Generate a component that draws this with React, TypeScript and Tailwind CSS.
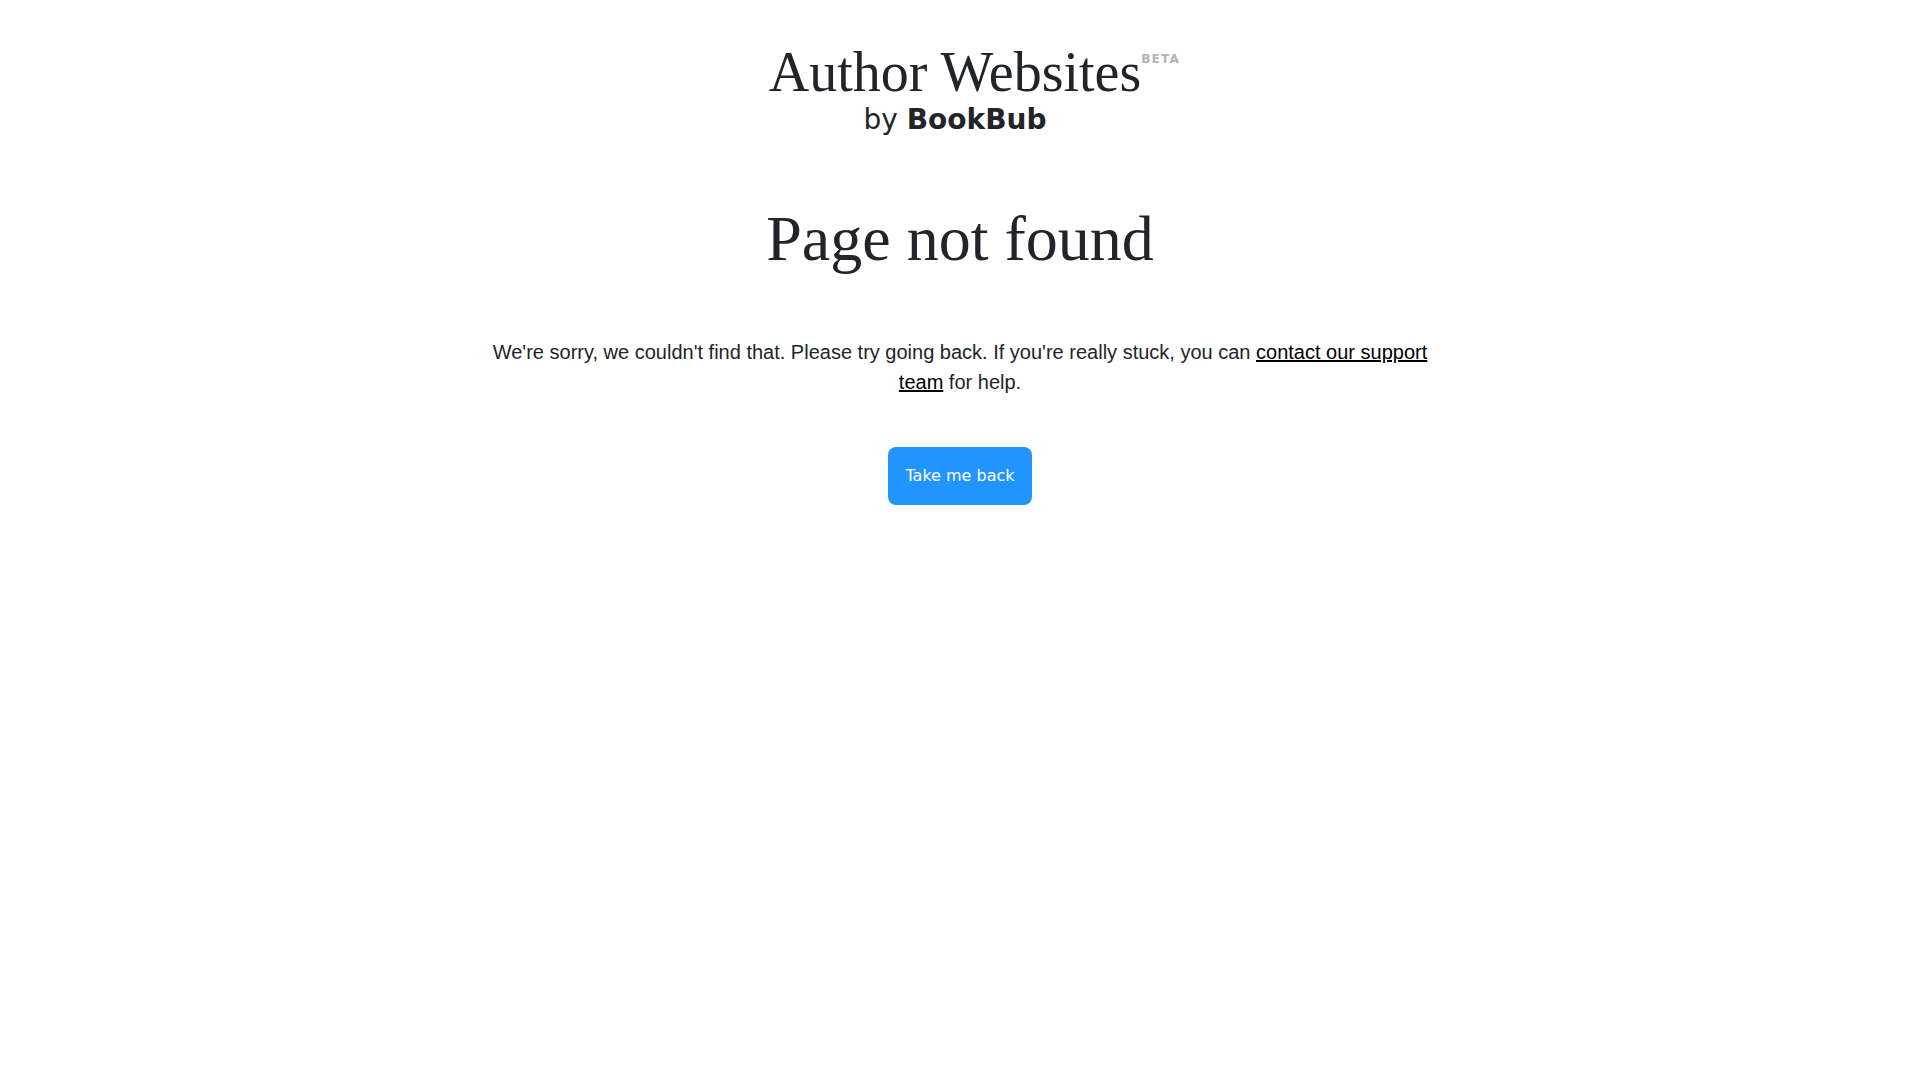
import React from 'react';

const Logo: React.FC = () => (
  <a href="/" className="relative flex flex-col items-center text-[#212529]">
    <span className="font-['Liberation_Serif',serif] text-[56px] leading-[56px]">
      Author Websites
    </span>
    <span className="text-[28px] leading-10">
      by <strong className="font-bold">BookBub</strong>
    </span>
    <span className="absolute top-[7px] left-full text-xs font-bold tracking-widest text-[#adb5bd]">
      BETA
    </span>
  </a>
);

const App: React.FC = () => {
  return (
    <div className="bg-white font-['DejaVu_Sans',sans-serif] text-[#212529]">
      <header className="flex justify-center pt-11 pr-2.5">
        <Logo />
      </header>

      <main className="mx-auto flex max-w-[960px] flex-col items-center px-3 pt-15 text-center">
        <h1 className="font-['Liberation_Serif',serif] text-[64px] leading-[78px]">
          Page not found
        </h1>
        <p className="mt-[59px] font-['Liberation_Sans',sans-serif] text-xl leading-[30px]">
          We're sorry, we couldn't find that. Please try going back. If you're really stuck, you can{' '}
          <a href="/contact" className="text-black underline">contact our support team</a> for help.
        </p>
        <button
          type="button"
          className="mt-[50px] rounded-lg bg-[#2194ff] px-[17px] py-4 text-base leading-[26px] text-white"
        >
          Take me back
        </button>
      </main>
    </div>
  );
};

export default App;
